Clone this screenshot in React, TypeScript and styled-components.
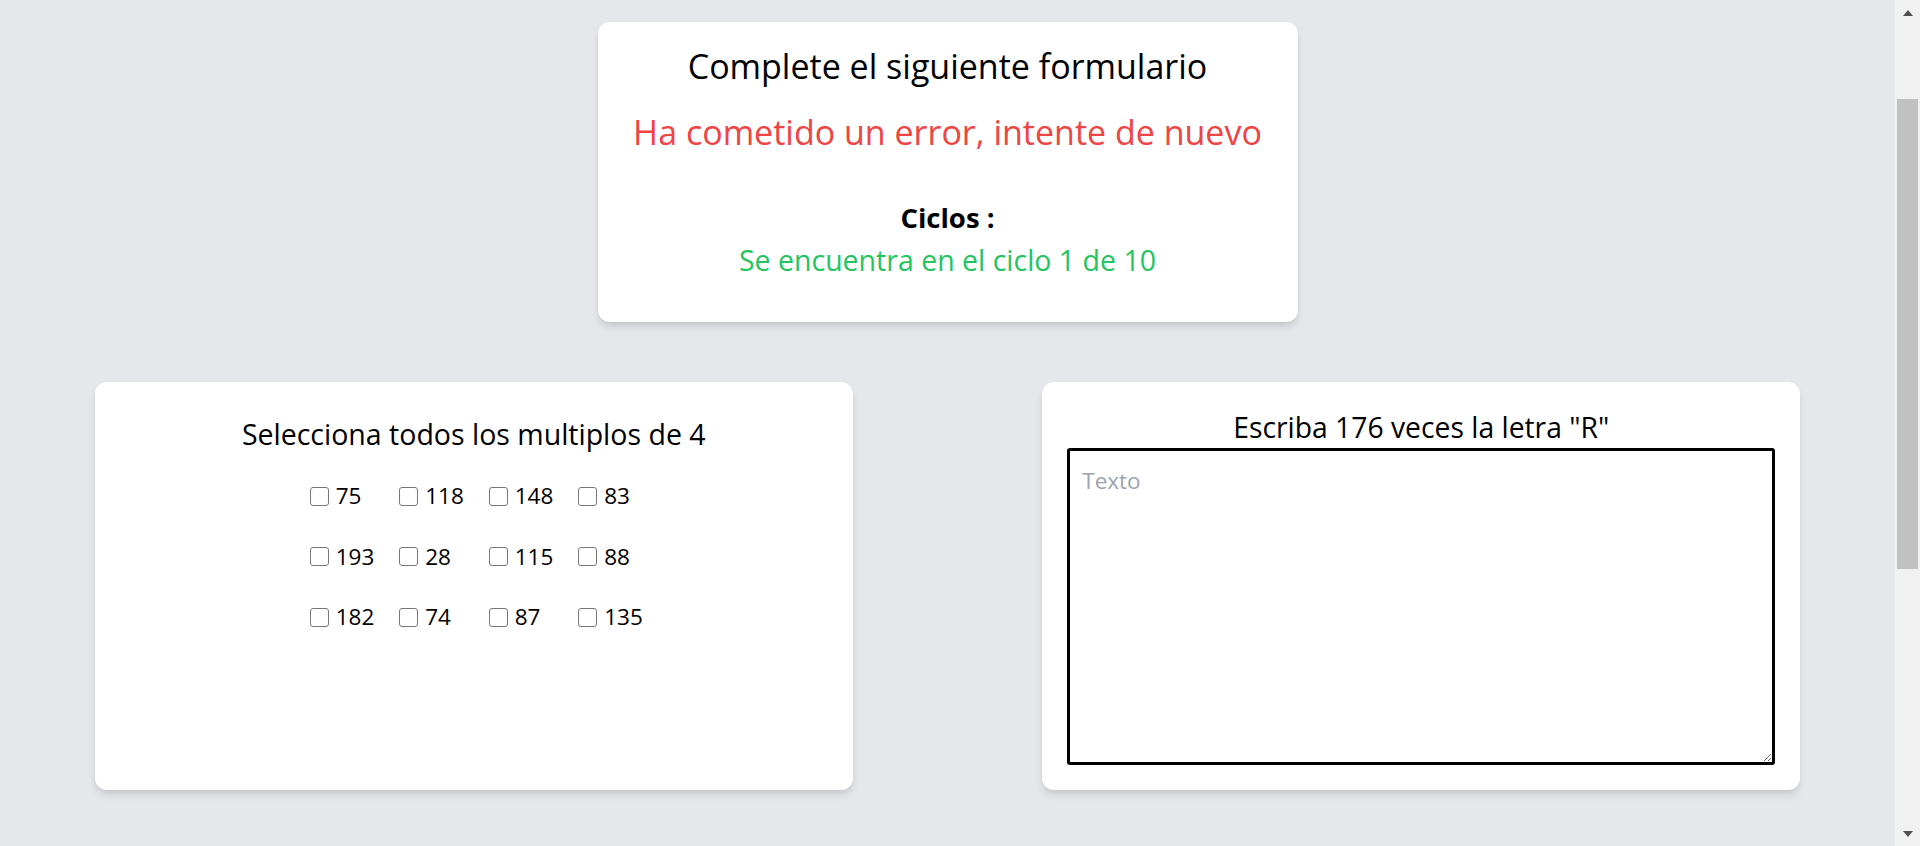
import React, { useLayoutEffect } from "react";
import styled, { createGlobalStyle } from "styled-components";

const GlobalStyle = createGlobalStyle`
  html, body {
    margin: 0;
    padding: 0;
    background: #e5e7eb;
  }
  body {
    font-family: "Open Sans", "Noto Sans", sans-serif;
    color: #000;
  }
  * { box-sizing: border-box; }
  ::-webkit-scrollbar { width: 0; height: 0; }
`;

const Page = styled.main`
  width: calc(100% - 25px);
  padding: 155px 0 511px;
  display: flex;
  flex-direction: column;
  align-items: stretch;
`;

/* Window scrollbar (Windows classic look), drawn over the right edge */
const ScrollBar = styled.div`
  position: fixed;
  top: 0;
  right: 0;
  width: 25px;
  height: 100vh;
  background: #f1f1f1;
  display: flex;
  flex-direction: column;
  z-index: 10;
`;

const ScrollButton = styled.div<{ $down?: boolean }>`
  height: 25px;
  flex: none;
  display: flex;
  align-items: center;
  justify-content: center;
  padding-top: ${(p) => (p.$down ? "0" : "1px")};
  &::before {
    content: "";
    width: 0;
    height: 0;
    border-left: 5.5px solid transparent;
    border-right: 5.5px solid transparent;
    ${(p) =>
      p.$down ? "border-top: 6px solid #505050;" : "border-bottom: 6px solid #505050;"}
  }
`;

const Track = styled.div`
  flex: 1;
  padding: 74px 2px 0;
`;

const Thumb = styled.div`
  height: 470px;
  background: #c1c1c1;
`;

const TopRow = styled.div`
  display: flex;
  justify-content: center;
`;

const Card = styled.section`
  background: #fff;
  border-radius: 12px;
  box-shadow: 0 6px 9px -1.5px rgba(0, 0, 0, 0.1), 0 3px 6px -3px rgba(0, 0, 0, 0.1);
`;

const StatusCard = styled(Card)`
  width: 700px;
  height: 300px;
  padding: 20px 24px 0;
  display: flex;
  flex-direction: column;
  align-items: center;
  text-align: center;
`;

const Title = styled.h1`
  margin: 0;
  font-size: 34px;
  line-height: 48px;
  font-weight: 400;
`;

const ErrorText = styled.p`
  margin: 18px 0 0;
  font-size: 34px;
  line-height: 48px;
  color: #ef4444;
`;

const CycleLabel = styled.h2`
  margin: 41px 0 0;
  font-size: 27.5px;
  line-height: 42px;
  font-weight: 700;
`;

const CycleInfo = styled.p`
  margin: 0;
  font-size: 28.5px;
  line-height: 42px;
  color: #22c55e;
`;

const TaskRow = styled.div`
  margin-top: 60px;
  display: flex;
  justify-content: space-around;
  align-items: stretch;
`;

const TaskCard = styled(Card)<{ $padTop: number }>`
  width: 40%;
  padding: ${(p) => p.$padTop}px 25px 25px;
  display: flex;
  flex-direction: column;
  align-items: center;
`;

const TaskTitle = styled.h3<{ $size: number }>`
  margin: 0;
  font-size: ${(p) => p.$size}px;
  line-height: 42px;
  font-weight: 400;
  text-align: center;
`;

const ChoiceGrid = styled.div`
  margin-top: 23px;
  display: grid;
  grid-template-columns: repeat(3, 89.5px) auto;
  row-gap: 24.5px;
  justify-content: center;
`;

const Choice = styled.label`
  display: flex;
  align-items: center;
  height: 36px;
  font-size: 22.5px;
  line-height: 36px;
  white-space: nowrap;
`;

const Box = styled.input`
  appearance: none;
  -webkit-appearance: none;
  width: 19px;
  height: 19px;
  margin: 0 7px 0 5px;
  border: 1.5px solid #767676;
  border-radius: 3px;
  background: #fff;
  flex: none;
`;

const Answer = styled.textarea`
  width: 100%;
  height: 317px;
  border: 3px solid #000;
  border-radius: 3px;
  padding: 12px;
  font-family: "Open Sans", "Noto Sans", sans-serif;
  font-size: 22.5px;
  line-height: 36px;
  color: #000;
  background: #fff;
  outline: none;
  &::placeholder {
    color: #9ca3af;
  }
`;

const numbers = [75, 118, 148, 83, 193, 28, 115, 88, 182, 74, 87, 135];

export default function App() {
  useLayoutEffect(() => {
    window.scrollTo(0, 133);
  }, []);

  return (
    <>
      <GlobalStyle />
      <Page>
        <TopRow>
          <StatusCard>
            <Title>Complete el siguiente formulario</Title>
            <ErrorText>Ha cometido un error, intente de nuevo</ErrorText>
            <CycleLabel>Ciclos :</CycleLabel>
            <CycleInfo>Se encuentra en el ciclo 1 de 10</CycleInfo>
          </StatusCard>
        </TopRow>
        <TaskRow>
          <TaskCard $padTop={31}>
            <TaskTitle $size={28.5}>Selecciona todos los multiplos de 4</TaskTitle>
            <ChoiceGrid>
              {numbers.map((n, i) => (
                <Choice key={i}>
                  <Box type="checkbox" />
                  {n}
                </Choice>
              ))}
            </ChoiceGrid>
          </TaskCard>
          <TaskCard $padTop={24}>
            <TaskTitle $size={28.3}>Escriba 176 veces la letra "R"</TaskTitle>
            <Answer placeholder="Texto" />
          </TaskCard>
        </TaskRow>
      </Page>
      <ScrollBar aria-hidden="true">
        <ScrollButton />
        <Track>
          <Thumb />
        </Track>
        <ScrollButton $down />
      </ScrollBar>
    </>
  );
}
